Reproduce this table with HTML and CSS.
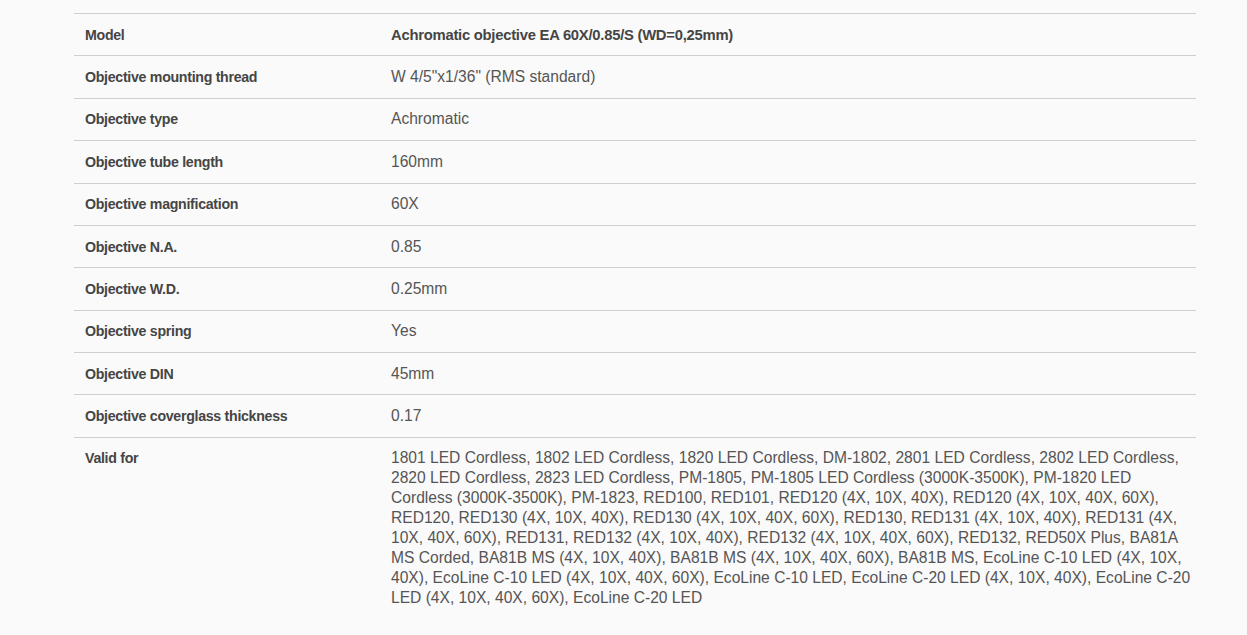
FILE: index.html
```html
<!DOCTYPE html>
<html>
<head>
<meta charset="utf-8">
<link rel="stylesheet" href="styles.css">
</head>
<body>
<div class="specs">
  <div class="row"><div class="label">Model</div><div class="value strong">Achromatic objective EA 60X/0.85/S (WD=0,25mm)</div></div>
  <div class="row"><div class="label">Objective mounting thread</div><div class="value">W 4/5"x1/36" (RMS standard)</div></div>
  <div class="row"><div class="label">Objective type</div><div class="value">Achromatic</div></div>
  <div class="row"><div class="label">Objective tube length</div><div class="value">160mm</div></div>
  <div class="row"><div class="label">Objective magnification</div><div class="value">60X</div></div>
  <div class="row"><div class="label">Objective N.A.</div><div class="value">0.85</div></div>
  <div class="row"><div class="label">Objective W.D.</div><div class="value">0.25mm</div></div>
  <div class="row"><div class="label">Objective spring</div><div class="value">Yes</div></div>
  <div class="row"><div class="label">Objective DIN</div><div class="value">45mm</div></div>
  <div class="row"><div class="label">Objective coverglass thickness</div><div class="value">0.17</div></div>
  <div class="row"><div class="label">Valid for</div><div class="value">1801 LED Cordless, 1802 LED Cordless, 1820 LED Cordless, DM-1802, 2801 LED Cordless, 2802 LED Cordless, 2820 LED Cordless, 2823 LED Cordless, PM-1805, PM-1805 LED Cordless (3000K-3500K), PM-1820 LED Cordless (3000K-3500K), PM-1823, RED100, RED101, RED120 (4X, 10X, 40X), RED120 (4X, 10X, 40X, 60X), RED120, RED130 (4X, 10X, 40X), RED130 (4X, 10X, 40X, 60X), RED130, RED131 (4X, 10X, 40X), RED131 (4X, 10X, 40X, 60X), RED131, RED132 (4X, 10X, 40X), RED132 (4X, 10X, 40X, 60X), RED132, RED50X Plus, BA81A MS Corded, BA81B MS (4X, 10X, 40X), BA81B MS (4X, 10X, 40X, 60X), BA81B MS, EcoLine C-10 LED (4X, 10X, 40X), EcoLine C-10 LED (4X, 10X, 40X, 60X), EcoLine C-10 LED, EcoLine C-20 LED (4X, 10X, 40X), EcoLine C-20 LED (4X, 10X, 40X, 60X), EcoLine C-20 LED</div></div>
</div>
</body>
</html>
```
FILE: styles.css
```css
html, body {
  margin: 0;
  padding: 0;
  background: #fafafa;
}
body {
  font-family: "Liberation Sans", Arial, sans-serif;
  color: #555;
}
.specs {
  margin: 13px 0 0 74px;
  width: 1122px;
  border-top: 1px solid #cfcfcf;
}
.row {
  display: grid;
  grid-template-columns: 306px 1fr;
  padding: 10.7px 4px 10.7px 11px;
  border-bottom: 1px solid #cfcfcf;
  line-height: 20px;
}
.row:last-child {
  border-bottom: none;
}
.label {
  font-size: 14.2px;
  letter-spacing: -0.3px;
  font-weight: bold;
  color: #454545;
}
.value {
  font-size: 15.6px;
  color: #555;
}
.value.strong {
  font-size: 14.8px;
  letter-spacing: -0.25px;
  font-weight: bold;
  color: #454545;
}
```
